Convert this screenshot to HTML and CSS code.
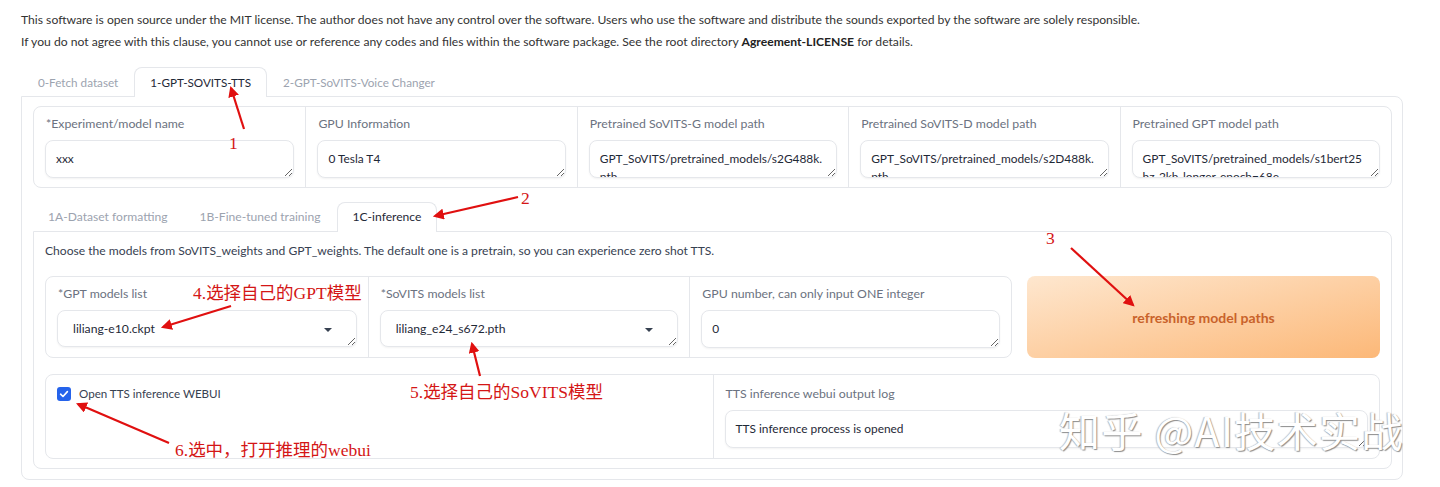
FILE: index.html
```html
<!DOCTYPE html>
<html lang="en">
<head>
    <meta charset="UTF-8">
    <meta name="viewport" content="width=device-width, initial-scale=1.0">
    <title>GPT-SoVITS WebUI</title>
    <link rel="stylesheet" href="styles.css">
</head>
<body>
    <div class="page">
        <p class="notice">This software is open source under the MIT license. The author does not have any control over the software. Users who use the software and distribute the sounds exported by the software are solely responsible.</p>
        <p class="notice">If you do not agree with this clause, you cannot use or reference any codes and files within the software package. See the root directory <b>Agreement-LICENSE</b> for details.</p>

        <div class="tab-bar top">
            <div class="tab">0-Fetch dataset</div>
            <div class="tab active">1-GPT-SOVITS-TTS</div>
            <div class="tab">2-GPT-SoVITS-Voice Changer</div>
        </div>
        <div class="panel outer">
            <div class="group five">
                <div class="field">
                    <label>*Experiment/model name</label>
                    <textarea class="box">xxx</textarea>
                </div>
                <div class="field">
                    <label>GPU Information</label>
                    <textarea class="box">0 Tesla T4</textarea>
                </div>
                <div class="field">
                    <label>Pretrained SoVITS-G model path</label>
                    <textarea class="box">GPT_SoVITS/pretrained_models/s2G488k.&#8203;pth</textarea>
                </div>
                <div class="field">
                    <label>Pretrained SoVITS-D model path</label>
                    <textarea class="box">GPT_SoVITS/pretrained_models/s2D488k.&#8203;pth</textarea>
                </div>
                <div class="field">
                    <label>Pretrained GPT model path</label>
                    <textarea class="box">GPT_SoVITS/pretrained_models/s1bert25&#8203;hz-2kh-longer-epoch=68e-step=50232.ckpt</textarea>
                </div>
            </div>

            <div class="tab-bar sub">
                <div class="tab">1A-Dataset formatting</div>
                <div class="tab">1B-Fine-tuned training</div>
                <div class="tab active">1C-inference</div>
            </div>
            <div class="panel inner">
                <p class="desc">Choose the models from SoVITS_weights and GPT_weights. The default one is a pretrain, so you can experience zero shot TTS.</p>
                <div class="models-row">
                    <div class="group three">
                        <div class="field">
                            <label>*GPT models list</label>
                            <div class="box select">liliang-e10.ckpt<span class="caret"></span></div>
                        </div>
                        <div class="field">
                            <label>*SoVITS models list</label>
                            <div class="box select">liliang_e24_s672.pth<span class="caret"></span></div>
                        </div>
                        <div class="field">
                            <label>GPU number, can only input ONE integer</label>
                            <textarea class="box">0</textarea>
                        </div>
                    </div>
                    <button class="refresh">refreshing model paths</button>
                </div>
                <div class="group two">
                    <div class="field">
                        <label class="check"><span class="checkbox"><svg viewBox="0 0 14 14" width="14" height="14"><path d="M3.6 7.2 L6 9.5 L10.4 4.6" fill="none" stroke="#fff" stroke-width="1.6" stroke-linecap="round" stroke-linejoin="round"/></svg></span>Open TTS inference WEBUI</label>
                    </div>
                    <div class="field">
                        <label>TTS inference webui output log</label>
                        <textarea class="box">TTS inference process is opened</textarea>
                    </div>
                </div>
            </div>
        </div>

        <div class="watermark">知乎 @AI技术实战</div>

        <svg class="notes" width="1440" height="487" viewBox="0 0 1440 487">
            <defs>
                <marker id="head" viewBox="0 0 10 10" refX="8" refY="5" markerWidth="5" markerHeight="5" orient="auto">
                    <path d="M0 0 L10 5 L0 10 Z" fill="#e01010"/>
                </marker>
            </defs>
            <g stroke="#e01010" stroke-width="2.2" marker-end="url(#head)">
                <line x1="244" y1="129" x2="231" y2="88"/>
                <line x1="518" y1="197" x2="435" y2="216"/>
                <line x1="1071" y1="248" x2="1133" y2="305"/>
                <line x1="231" y1="306" x2="163" y2="327"/>
                <line x1="480" y1="376" x2="472" y2="344"/>
                <line x1="169" y1="443" x2="78" y2="404"/>
            </g>
            <g class="note-text">
                <text x="229" y="149">1</text>
                <text x="521" y="204">2</text>
                <text x="1046" y="244">3</text>
                <text x="193" y="299">4.选择自己的GPT模型</text>
                <text x="410" y="398">5.选择自己的SoVITS模型</text>
                <text x="175" y="456">6.选中，打开推理的webui</text>
            </g>
        </svg>
    </div>
</body>
</html>
```

FILE: styles.css
```css
body {
    margin: 0;
    background-color: #fff;
    font-family: "Lato", "Noto Sans CJK SC", sans-serif;
    color: #374151;
}
.page {
    position: relative;
    width: 1440px;
    height: 487px;
    padding: 9px 37px 0 21px;
    box-sizing: border-box;
    overflow: hidden;
}
.notice {
    margin: 0;
    font-size: 12.15px;
    line-height: 22px;
    color: #333;
}
.notice b {
    color: #222;
}

/* tabs */
.tab-bar {
    display: flex;
    align-items: flex-end;
}
.tab-bar.top {
    margin-top: 14px;
    padding-left: 1px;
}
.tab-bar.sub {
    margin-top: 14px;
    margin-left: -1px;
}
.tab {
    height: 28px;
    line-height: 28px;
    padding: 0 15px;
    font-size: 11.7px;
    color: #9ca3af;
    border: 1px solid transparent;
    border-bottom: none;
    border-radius: 8px 8px 0 0;
}
.tab-bar.sub .tab {
    font-size: 12.1px;
}
.tab.active {
    color: #1f2937;
    background: #fff;
    border-color: #e5e7eb;
    position: relative;
    margin-bottom: -1px;
    height: 29px;
}

/* panels */
.panel {
    border: 1px solid #e5e7eb;
    border-radius: 0 8px 8px 8px;
}
.panel.outer {
    padding: 9px 10px 10px 11px;
}
.panel.inner {
    padding: 9px 11px 9px 11px;
}
.desc {
    margin: 0 0 15px;
    height: 20px;
    line-height: 20px;
    font-size: 12.1px;
    color: #374151;
}

/* groups of fields */
.group {
    display: grid;
    border: 1px solid #e5e7eb;
    border-radius: 8px;
    background: #fff;
    overflow: hidden;
}
.group.five {
    grid-template-columns: repeat(5, 1fr);
}
.group.three {
    grid-template-columns: repeat(3, 1fr);
}
.group.two {
    grid-template-columns: 1fr 1fr;
    margin-top: 16px;
}
.field {
    padding: 8px 11px 9px 11px;
    border-left: 1px solid #e5e7eb;
    min-width: 0;
}
.field:first-child {
    border-left: none;
}
.field label {
    display: block;
    height: 18px;
    line-height: 18px;
    font-size: 12.3px;
    color: #6b7280;
    margin-bottom: 7px;
    padding-left: 1px;
}
.box {
    display: block;
    width: 100%;
    box-sizing: border-box;
    height: 38px;
    padding: 9px 10px;
    border: 1px solid #e5e7eb;
    border-radius: 8px;
    box-shadow: 0 1px 2px rgba(0, 0, 0, 0.05);
    background: #fff;
    font-family: "Lato", sans-serif;
    font-size: 11.9px;
    line-height: 18px;
    color: #1f2937;
    overflow: hidden;
    resize: vertical;
    overflow-wrap: anywhere;
}
.box.select {
    position: relative;
    height: 37px;
    padding: 9px 15px;
    font-size: 12.2px;
}
.caret {
    position: absolute;
    right: 24px;
    top: 17px;
    border-left: 4px solid transparent;
    border-right: 4px solid transparent;
    border-top: 4px solid #374151;
}

/* model row */
.models-row {
    display: grid;
    grid-template-columns: 967fr 353fr;
    gap: 15px;
}
.refresh {
    border: none;
    border-radius: 8px;
    background: linear-gradient(to bottom right, #fee7cf, #fcb878);
    color: #c9622a;
    font-family: "Lato", sans-serif;
    font-size: 14px;
    font-weight: bold;
}
.group.two .field {
    height: 64px;
    padding-top: 10px;
}
.field label.check {
    display: flex;
    align-items: center;
    gap: 8px;
    font-size: 11.6px;
    color: #374151;
    padding-left: 0;
}
.checkbox {
    display: flex;
    width: 14px;
    height: 14px;
    border-radius: 3px;
    background: #2563eb;
}

/* overlays */
.watermark {
    position: absolute;
    left: 1059px;
    top: 399px;
    font-family: "Noto Sans CJK SC", sans-serif;
    font-size: 41px;
    letter-spacing: 1.4px;
    color: #fff;
    text-shadow: 1px 1px 1px #8c8c8c, -1px 0 1px #bbb;
    white-space: nowrap;
}
.notes {
    position: absolute;
    left: 0;
    top: 0;
    pointer-events: none;
}
.note-text text {
    fill: #d41616;
    font-family: "Liberation Serif", "Noto Sans CJK SC", serif;
    font-size: 17.5px;
}
```
